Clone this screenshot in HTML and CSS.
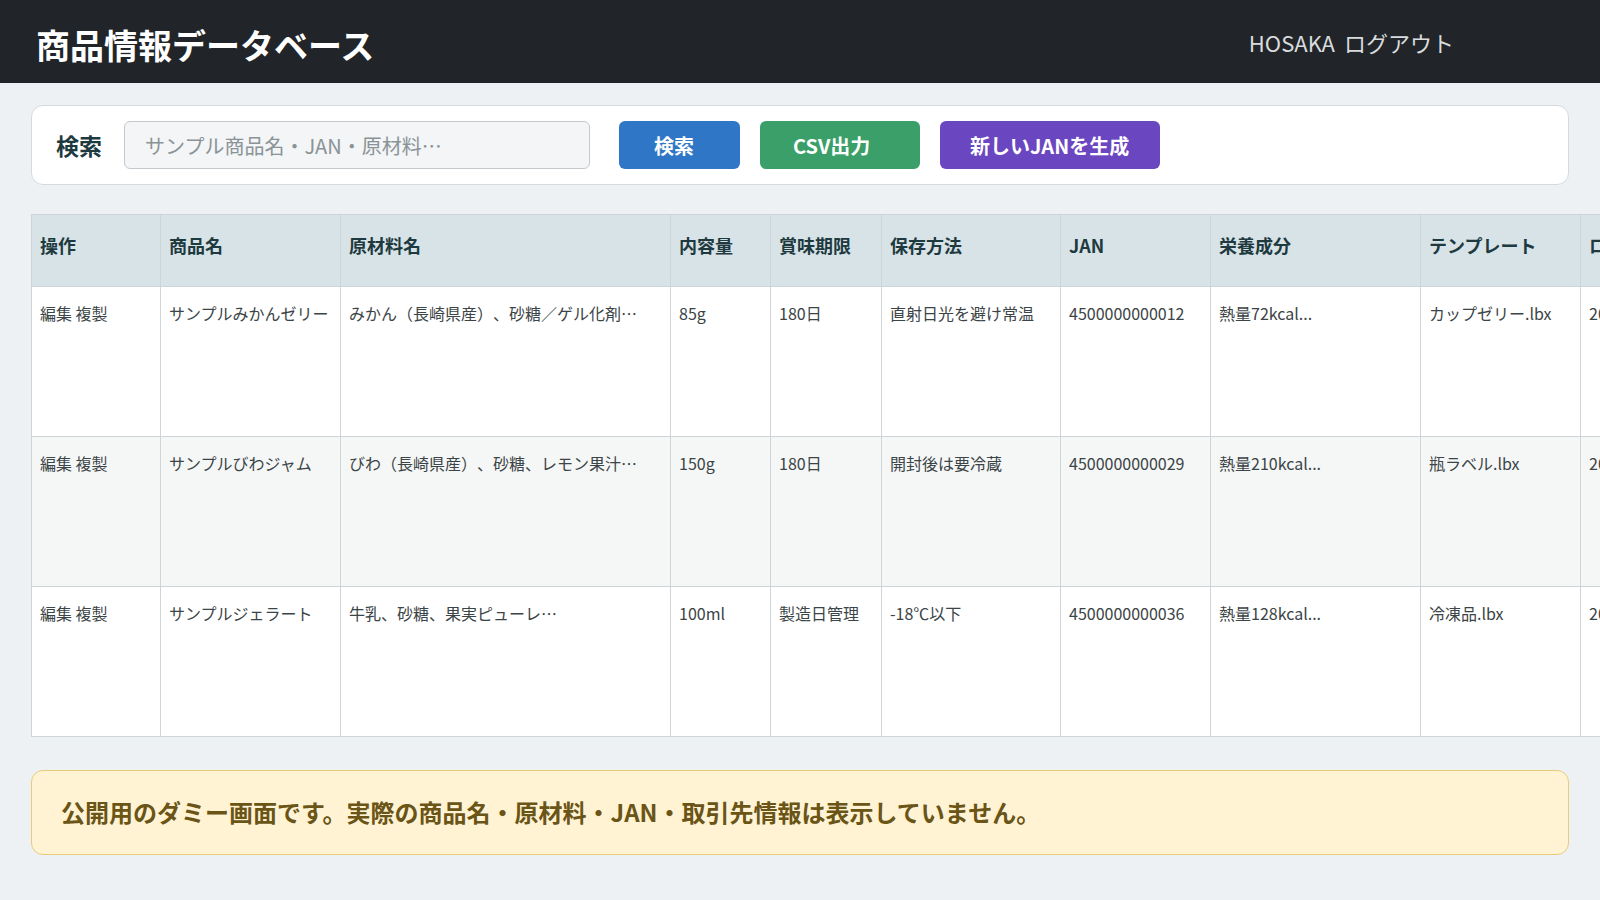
FILE: index.html
```html
<!DOCTYPE html>
<html lang="ja">
<head>
<meta charset="UTF-8" />
<meta name="viewport" content="width=device-width, initial-scale=1" />
<title>商品情報データベース</title>
<link rel="stylesheet" href="styles.css">
</head>
<body>

<header class="topbar">
  <h1 class="title">商品情報データベース</h1>
  <nav class="usernav">
    <span>HOSAKA</span>
    <a href="#">ログアウト</a>
  </nav>
</header>

<main class="page">
  <form class="search-card" onsubmit="return false">
    <label for="q" class="search-label">検索</label>
    <input type="text" id="q" class="search-input" placeholder="サンプル商品名・JAN・原材料…" />
    <button class="btn btn-blue">検索</button>
    <button class="btn btn-green">CSV出力</button>
    <button class="btn btn-purple">新しいJANを生成</button>
  </form>

  <div class="table-wrap">
    <table class="items">
      <colgroup>
        <col style="width:129px"><col style="width:180px"><col style="width:330px">
        <col style="width:100px"><col style="width:111px"><col style="width:179px">
        <col style="width:150px"><col style="width:210px"><col style="width:160px">
        <col style="width:180px">
      </colgroup>
      <thead>
        <tr>
          <th>操作</th><th>商品名</th><th>原材料名</th><th>内容量</th><th>賞味期限</th>
          <th>保存方法</th><th>JAN</th><th>栄養成分</th><th>テンプレート</th><th>ロット番号</th>
        </tr>
      </thead>
      <tbody>
        <tr>
          <td>編集 複製</td>
          <td>サンプルみかんゼリー</td>
          <td>みかん（長崎県産）、砂糖／ゲル化剤…</td>
          <td>85g</td>
          <td>180日</td>
          <td>直射日光を避け常温</td>
          <td>4500000000012</td>
          <td>熱量72kcal...</td>
          <td>カップゼリー.lbx</td>
          <td>2025-06-01</td>
        </tr>
        <tr>
          <td>編集 複製</td>
          <td>サンプルびわジャム</td>
          <td>びわ（長崎県産）、砂糖、レモン果汁…</td>
          <td>150g</td>
          <td>180日</td>
          <td>開封後は要冷蔵</td>
          <td>4500000000029</td>
          <td>熱量210kcal...</td>
          <td>瓶ラベル.lbx</td>
          <td>2025-06-02</td>
        </tr>
        <tr>
          <td>編集 複製</td>
          <td>サンプルジェラート</td>
          <td>牛乳、砂糖、果実ピューレ…</td>
          <td>100ml</td>
          <td>製造日管理</td>
          <td>-18℃以下</td>
          <td>4500000000036</td>
          <td>熱量128kcal...</td>
          <td>冷凍品.lbx</td>
          <td>2025-06-03</td>
        </tr>
      </tbody>
    </table>
  </div>

  <div class="notice">公開用のダミー画面です。実際の商品名・原材料・JAN・取引先情報は表示していません。</div>
</main>

</body>
</html>
```

FILE: styles.css
```css
html, body {
  overflow-x: hidden;
}
body {
  margin: 0;
  background: #eef1f3;
  color: #3b4446;
  font-family: "Noto Sans CJK JP", "Noto Sans", sans-serif;
  text-spacing-trim: space-all;
}
.topbar {
  height: 83px;
  background: #212529;
  display: flex;
  align-items: center;
  justify-content: space-between;
  padding: 0 146px 0 36px;
}
.title {
  margin: 0;
  color: #fff;
  font-size: 34px;
  font-weight: 700;
  line-height: 1;
  padding-top: 7px;
}
.usernav {
  display: flex;
  gap: 9px;
  font-size: 22px;
  color: #d9dcde;
}
.usernav a {
  color: #d9dcde;
  text-decoration: none;
}
.page {
  padding: 22px 31px 40px;
}
.search-card {
  display: flex;
  align-items: center;
  gap: 20px;
  height: 78px;
  padding: 0 24px;
  background: #fff;
  border: 1px solid #d5dadd;
  border-radius: 12px;
}
.search-label {
  font-size: 23px;
  font-weight: 700;
  color: #1e3a3f;
  margin-right: 2px;
}
.search-input {
  width: 466px;
  height: 48px;
  box-sizing: border-box;
  padding: 0 20px;
  font-family: inherit;
  font-size: 20px;
  background: #f3f5f6;
  border: 1px solid #c3c9cc;
  border-radius: 6px;
  margin-right: 9px;
}
.search-input::placeholder {
  color: #8a9396;
}
.btn {
  height: 48px;
  border: none;
  border-radius: 6px;
  color: #fff;
  font-family: inherit;
  font-size: 20px;
  font-weight: 700;
  text-align: left;
  cursor: pointer;
}
.btn-blue { background: #2f77c6; width: 121px; padding-left: 35px; }
.btn-green { background: #3a9f68; width: 160px; padding-left: 33px; }
.btn-purple { background: #6b46c1; width: 220px; padding-left: 30px; }

.table-wrap {
  margin-top: 29px;
}
.items {
  border-collapse: collapse;
  table-layout: fixed;
  width: 1729px;
  background: #fff;
}
.items th, .items td {
  border: 1px solid #cdd5d8;
  text-align: left;
  vertical-align: top;
  padding: 0 8px;
  white-space: nowrap;
  overflow: hidden;
}
.items th {
  height: 72px;
  box-sizing: border-box;
  padding-top: 17px;
  background: #d8e3e8;
  color: #1e3a3f;
  font-size: 18px;
  font-weight: 700;
  line-height: 26px;
}
.items td {
  height: 150px;
  box-sizing: border-box;
  padding-top: 14px;
  font-size: 16px;
  line-height: 24px;
}
.items tbody tr:nth-child(even) td {
  background: #f5f7f7;
}
.notice {
  margin-top: 33px;
  height: 85px;
  box-sizing: border-box;
  display: flex;
  align-items: center;
  padding: 0 29px 3px;
  background: #fff3d4;
  border: 1px solid #e8cb78;
  border-radius: 12px;
  color: #6a5416;
  font-size: 24px;
  font-weight: 700;
}
```
